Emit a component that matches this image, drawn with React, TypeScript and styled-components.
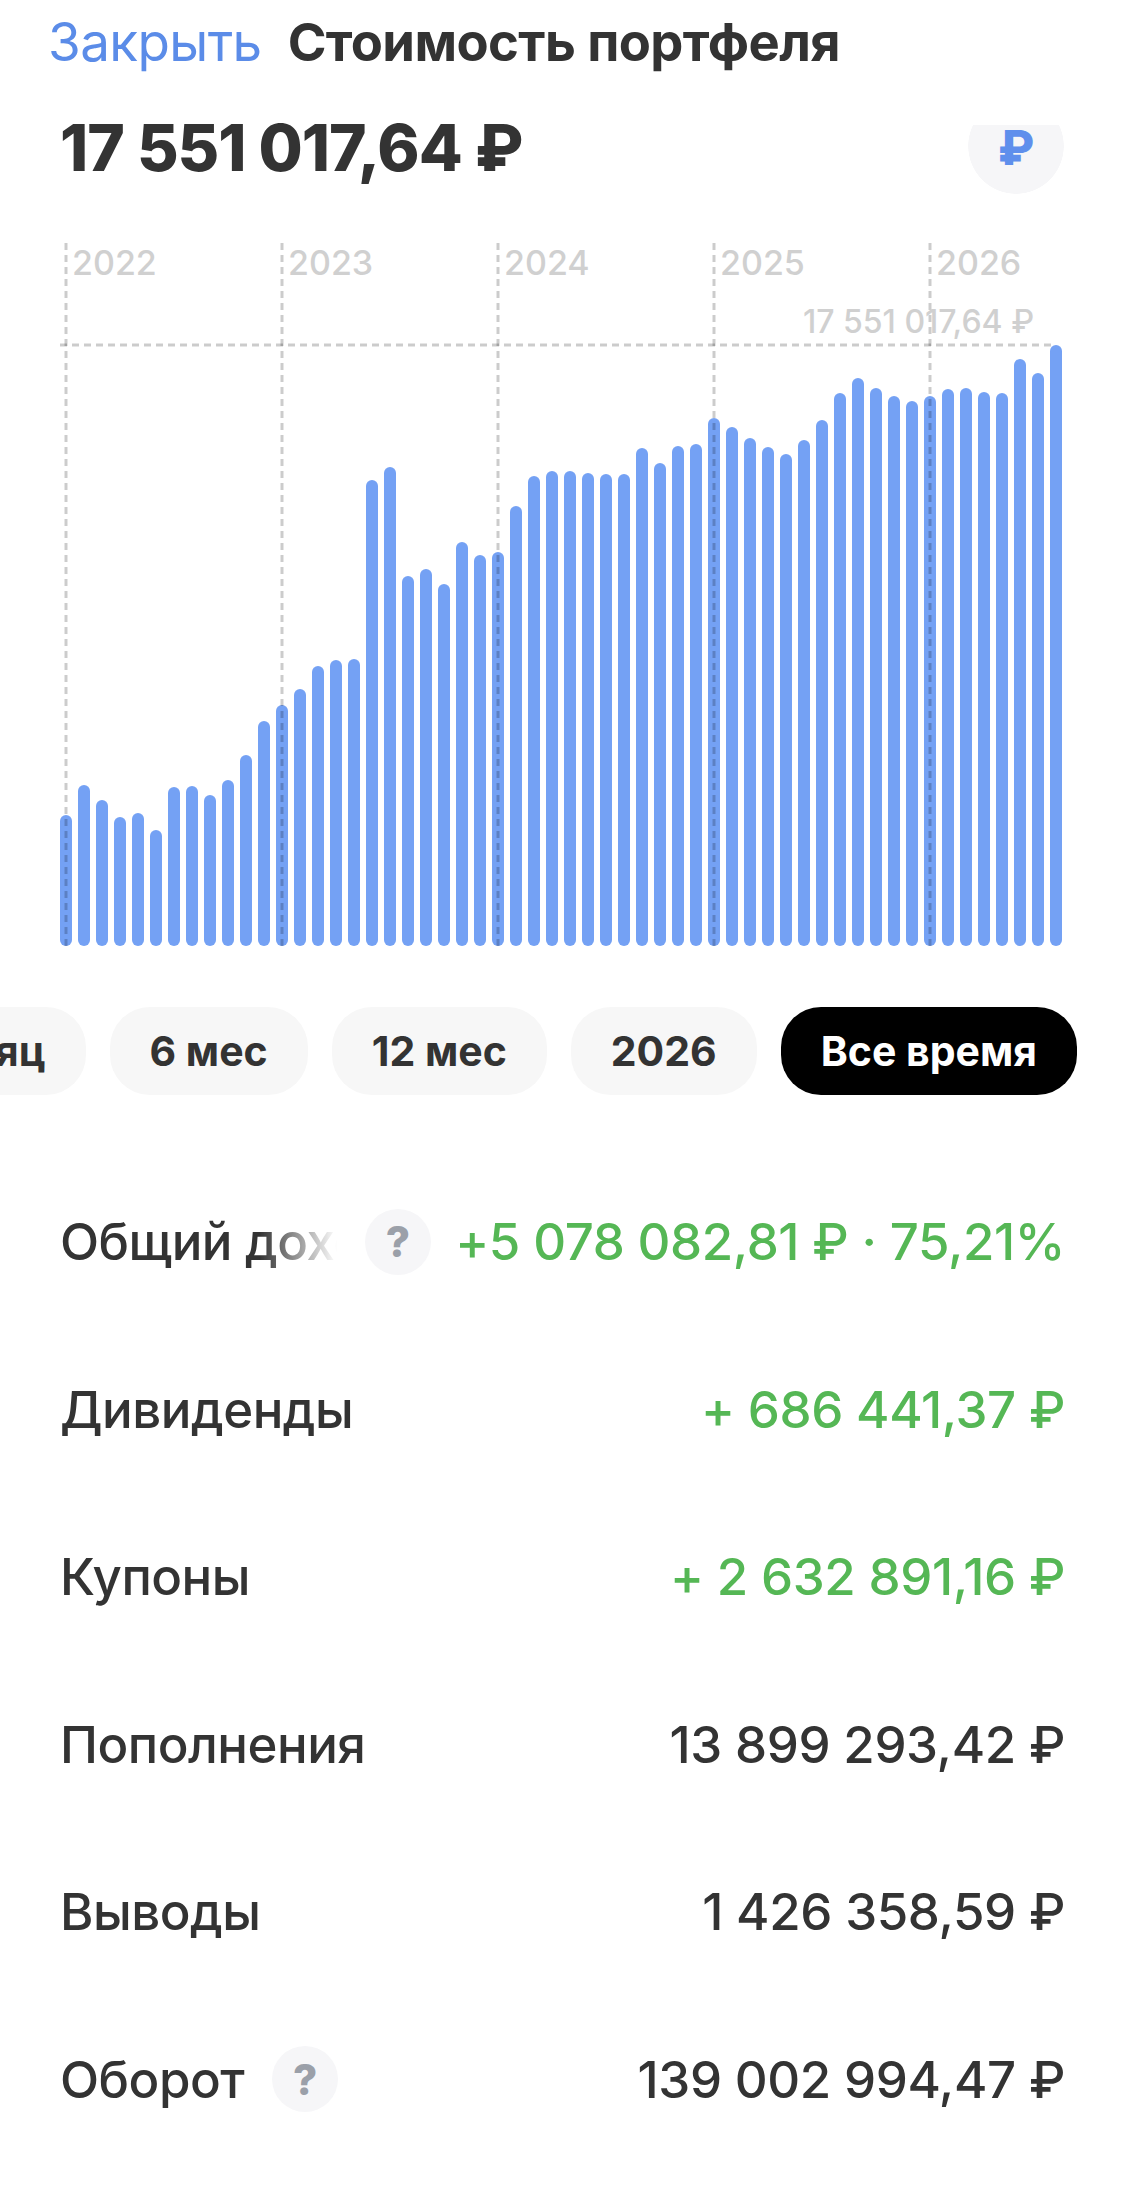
import React from 'react'
import styled, { createGlobalStyle } from 'styled-components'

const GlobalStyle = createGlobalStyle`
    html, body {
        margin: 0;
        padding: 0;
        background: #fff;
    }
    body {
        font-family: Inter, "Liberation Sans", sans-serif;
        color: #333;
    }
`

// top of every bar, in page pixels as measured from the screen
const barTops = [
    815, 785, 800, 817, 813, 830, 787, 786, 795, 780, 755, 721, 705, 689, 666, 660, 659, 480, 467, 576,
    569, 584, 542, 555, 552, 506, 476, 471, 471, 473, 474, 474, 448, 463, 446, 444, 418, 427, 438, 447,
    454, 440, 420, 393, 378, 388, 396, 401, 396, 389, 388, 392, 393, 359, 373, 345
]
const years = ['2022', '2023', '2024', '2025', '2026']
const CHART_TOP = 243
const BOTTOM = 946 - CHART_TOP

const periods = ['Месяц', '6 мес', '12 мес', '2026', 'Все время']

const rows = [
    { label: 'Общий доход', value: '+5 078 082,81 ₽ · 75,21%', green: true, hint: true, faded: true },
    { label: 'Дивиденды', value: '+ 686 441,37 ₽', green: true },
    { label: 'Купоны', value: '+ 2 632 891,16 ₽', green: true },
    { label: 'Пополнения', value: '13 899 293,42 ₽' },
    { label: 'Выводы', value: '1 426 358,59 ₽' },
    { label: 'Оборот', value: '139 002 994,47 ₽', hint: true }
]

const Portfolio = () => {
    return (
        <Page>
            <GlobalStyle />
            <Header>
                <CloseLink>Закрыть</CloseLink>
                <Title>Стоимость портфеля</Title>
            </Header>
            <Summary>
                <Total>17 551 017,64 ₽</Total>
                <CurrencyButton>₽</CurrencyButton>
            </Summary>
            <ChartBox>
                <svg width="1125" height="712" viewBox="0 0 1125 712">
                    {barTops.map((top, i) => (
                        <rect
                            key={i}
                            x={60 + i * 18}
                            y={top - CHART_TOP}
                            width="12"
                            height={BOTTOM - (top - CHART_TOP)}
                            rx="6"
                            fill="#74a1f4"
                        />
                    ))}
                    {years.map((year, i) => (
                        <g key={year}>
                            <line x1={66 + i * 216} x2={66 + i * 216} y1="0" y2={BOTTOM} stroke="#000" strokeOpacity="0.2" strokeWidth="3" strokeDasharray="7 5" />
                            <ChartYear x={72 + i * 216} y="32">{year}</ChartYear>
                        </g>
                    ))}
                    <line x1="60" x2="1056" y1="102" y2="102" stroke="#000" strokeOpacity="0.2" strokeWidth="3" strokeDasharray="7 5" />
                    <ChartValue x="1034" y="90" textAnchor="end">17 551 017,64 ₽</ChartValue>
                </svg>
            </ChartBox>
            <Periods>
                {periods.map((period) => (
                    <Period key={period} $active={period === 'Все время'}>{period}</Period>
                ))}
            </Periods>
            <Stats>
                {rows.map((row) => (
                    <StatRow key={row.label}>
                        <StatLabel $faded={row.faded}>{row.label}</StatLabel>
                        {row.hint && <Hint>?</Hint>}
                        <StatValue $green={row.green}>{row.value}</StatValue>
                    </StatRow>
                ))}
            </Stats>
        </Page>
    )
}

export default Portfolio

const Page = styled.div`
    width: 1125px;
    height: 2205px;
    overflow: hidden;
    background: #fff;
`

const Header = styled.div`
    display: flex;
    align-items: center;
    gap: 26px;
    height: 83px;
    padding-left: 48px;
    margin-bottom: 42px;
`

const CloseLink = styled.span`
    font-size: 53px;
    font-weight: 400;
    color: #5b8ce8;
    letter-spacing: -0.6px;
`

const Title = styled.span`
    font-size: 52.5px;
    font-weight: 700;
    color: #333;
    letter-spacing: -0.6px;
`

const Summary = styled.div`
    display: flex;
    justify-content: space-between;
    align-items: flex-start;
    height: 69px;
    padding: 0 61px 0 60px;
`

const Total = styled.div`
    font-size: 64px;
    font-weight: 800;
    line-height: 46px;
    color: #333;
    letter-spacing: -1px;
`

// the round button is scrolled under the header, only its lower part shows
const CurrencyButton = styled.div`
    width: 96px;
    height: 69px;
    line-height: 46px;
    text-align: center;
    background: radial-gradient(circle 48px at 48px 21px, #f6f6f8 47.5px, transparent 48px);
    color: #5f8fec;
    font-size: 48px;
    font-weight: 800;
`

const ChartBox = styled.div`
    height: 712px;
    margin-top: 49px;

    svg {
        display: block;
    }
`

const ChartYear = styled.text`
    font-family: Inter, "Liberation Sans", sans-serif;
    font-size: 34px;
    font-weight: 500;
    fill: #d0d0d0;
`

const ChartValue = styled.text`
    font-family: Inter, "Liberation Sans", sans-serif;
    font-size: 32px;
    font-weight: 500;
    fill: #d0d0d0;
`

const Periods = styled.div`
    display: flex;
    justify-content: flex-end;
    gap: 24px;
    padding-right: 48px;
    margin-top: 52px;
    overflow: hidden;
`

const Period = styled.div<{ $active?: boolean }>`
    flex: none;
    height: 88px;
    padding: 0 40px;
    display: flex;
    align-items: center;
    border-radius: 40px;
    font-size: 41px;
    font-weight: 700;
    background: ${(p) => (p.$active ? '#000' : '#f7f7f7')};
    color: ${(p) => (p.$active ? '#fff' : '#333')};
`

const Stats = styled.div`
    margin-top: 63px;
    padding: 0 60px;
`

const StatRow = styled.div`
    display: flex;
    align-items: center;
    height: 167.5px;
`

const StatLabel = styled.div<{ $faded?: boolean }>`
    font-size: 51px;
    font-weight: 500;
    color: #333;
    letter-spacing: -0.5px;
    white-space: nowrap;
    ${(p) => p.$faded && `
        width: 277px;
        overflow: hidden;
        -webkit-mask-image: linear-gradient(to right, #000 72%, transparent 100%);
        mask-image: linear-gradient(to right, #000 72%, transparent 100%);
    `}
`

const Hint = styled.div`
    flex: none;
    display: flex;
    align-items: center;
    justify-content: center;
    width: 66px;
    height: 66px;
    margin-left: 28px;
    border-radius: 50%;
    background: #f6f6f8;
    color: #9ba0a9;
    font-size: 42px;
    font-weight: 800;
`

const StatValue = styled.div<{ $green?: boolean }>`
    margin-left: auto;
    font-size: 51px;
    font-weight: 500;
    letter-spacing: -0.4px;
    white-space: nowrap;
    color: ${(p) => (p.$green ? '#55b755' : '#333')};
`
